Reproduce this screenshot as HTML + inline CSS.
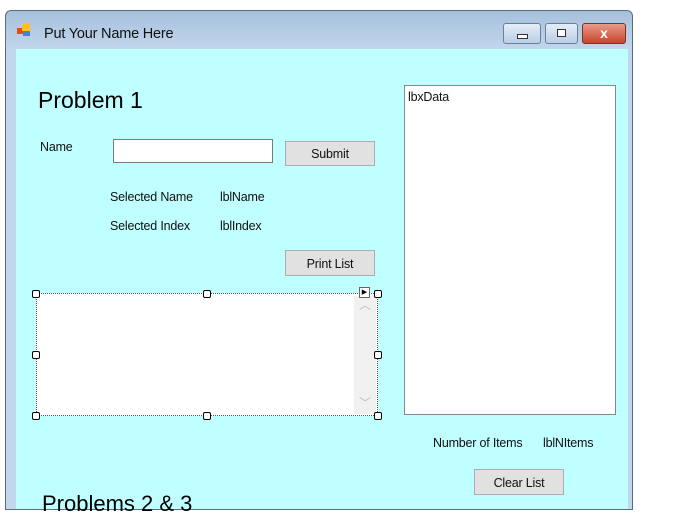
<!DOCTYPE html><html><head><style>
body{margin:0;width:687px;height:498px;background:#fff;position:relative;overflow:hidden;font-family:"Liberation Sans",sans-serif;}
.a{position:absolute;}
.t{font-size:12.5px;letter-spacing:-0.2px;color:#111;}
.btn{position:absolute;background:#e1e1e1;border:1px solid #adadad;box-sizing:border-box;font-size:12.5px;letter-spacing:-0.2px;text-align:center;color:#111;}
.h{position:absolute;width:6px;height:6px;background:#fff;border:1px solid #000;border-radius:2px;}
</style></head><body>
<div class="a" style="left:5px;top:10px;width:628px;height:500px;border:1px solid #5a6d80;border-radius:6px 6px 0 0;background:linear-gradient(#a6c0dc,#c3d7ec 40px,#c3d7ec);box-sizing:border-box"></div>
<div class="a" style="left:16px;top:49px;width:612px;height:460px;background:#bfffff;"></div>
<div class="a" style="left:17px;top:28px;width:6px;height:6px;background:#e04b2a"></div>
<div class="a" style="left:22px;top:23px;width:8px;height:8px;background:#f6c230"></div>
<div class="a" style="left:23px;top:31px;width:7px;height:5px;background:#4a7ed0"></div>
<div class="a t" style="left:44px;top:26px;font-size:14.5px;letter-spacing:-0.2px">Put Your Name Here</div>
<div class="a" style="left:503px;top:23px;width:38px;height:21px;border:1px solid #6b7f98;border-radius:3px;box-sizing:border-box;background:linear-gradient(#e4eef8,#b9cde4)"><div class="a" style="left:13px;top:10px;width:9px;height:3px;border:1px solid #333;background:#fff"></div></div>
<div class="a" style="left:545px;top:23px;width:33px;height:21px;border:1px solid #6b7f98;border-radius:3px;box-sizing:border-box;background:linear-gradient(#e4eef8,#b9cde4)"><div class="a" style="left:11px;top:5px;width:7px;height:6px;border:1px solid #333;background:#fff"></div></div>
<div class="a" style="left:582px;top:23px;width:44px;height:21px;border:1px solid #7a3325;border-radius:3px;box-sizing:border-box;background:linear-gradient(#e89a88,#c8452c);color:#fff;font-weight:bold;font-size:14px;text-align:center;line-height:19px">x</div>
<div class="a" style="left:38px;top:87px;font-size:23px;color:#000">Problem 1</div>
<div class="a t" style="left:40px;top:140px">Name</div>
<div class="a" style="left:113px;top:139px;width:160px;height:24px;background:#fff;border:1px solid #7a7a7a;box-sizing:border-box"></div>
<div class="btn" style="left:285px;top:141px;width:90px;height:25px;line-height:25px">Submit</div>
<div class="a t" style="left:110px;top:190px">Selected Name</div>
<div class="a t" style="left:220px;top:190px">lblName</div>
<div class="a t" style="left:110px;top:219px">Selected Index</div>
<div class="a t" style="left:220px;top:219px">lblIndex</div>
<div class="btn" style="left:285px;top:250px;width:90px;height:26px;line-height:26px">Print List</div>
<div class="a" style="left:36px;top:293px;width:342px;height:123px;border:1px dotted #555;box-sizing:border-box;background:#fff"></div>
<div class="a" style="left:354px;top:296px;width:22px;height:118px;background:#f0f0f0;color:#bbb;font-size:12px;text-align:center">︿<div style="position:absolute;bottom:3px;width:22px">﹀</div></div>
<div class="h" style="left:32px;top:290px"></div><div class="h" style="left:203px;top:290px"></div><div class="h" style="left:374px;top:290px"></div>
<div class="h" style="left:32px;top:351px"></div><div class="h" style="left:374px;top:351px"></div>
<div class="h" style="left:32px;top:412px"></div><div class="h" style="left:203px;top:412px"></div><div class="h" style="left:374px;top:412px"></div>
<div class="a" style="left:359px;top:287px;width:9px;height:9px;border:1px solid #666;background:#fff;font-size:7px;line-height:9px;text-align:center">▶</div>
<div class="a" style="left:404px;top:85px;width:212px;height:330px;background:#fff;border:1px solid #828790;box-sizing:border-box"></div>
<div class="a t" style="left:408px;top:90px">lbxData</div>
<div class="a t" style="left:433px;top:436px">Number of Items</div>
<div class="a t" style="left:543px;top:436px">lblNItems</div>
<div class="btn" style="left:474px;top:469px;width:90px;height:26px;line-height:26px">Clear List</div>
<div class="a" style="left:42px;top:491px;font-size:22px;color:#000">Problems 2 &amp; 3</div>
</body></html>
